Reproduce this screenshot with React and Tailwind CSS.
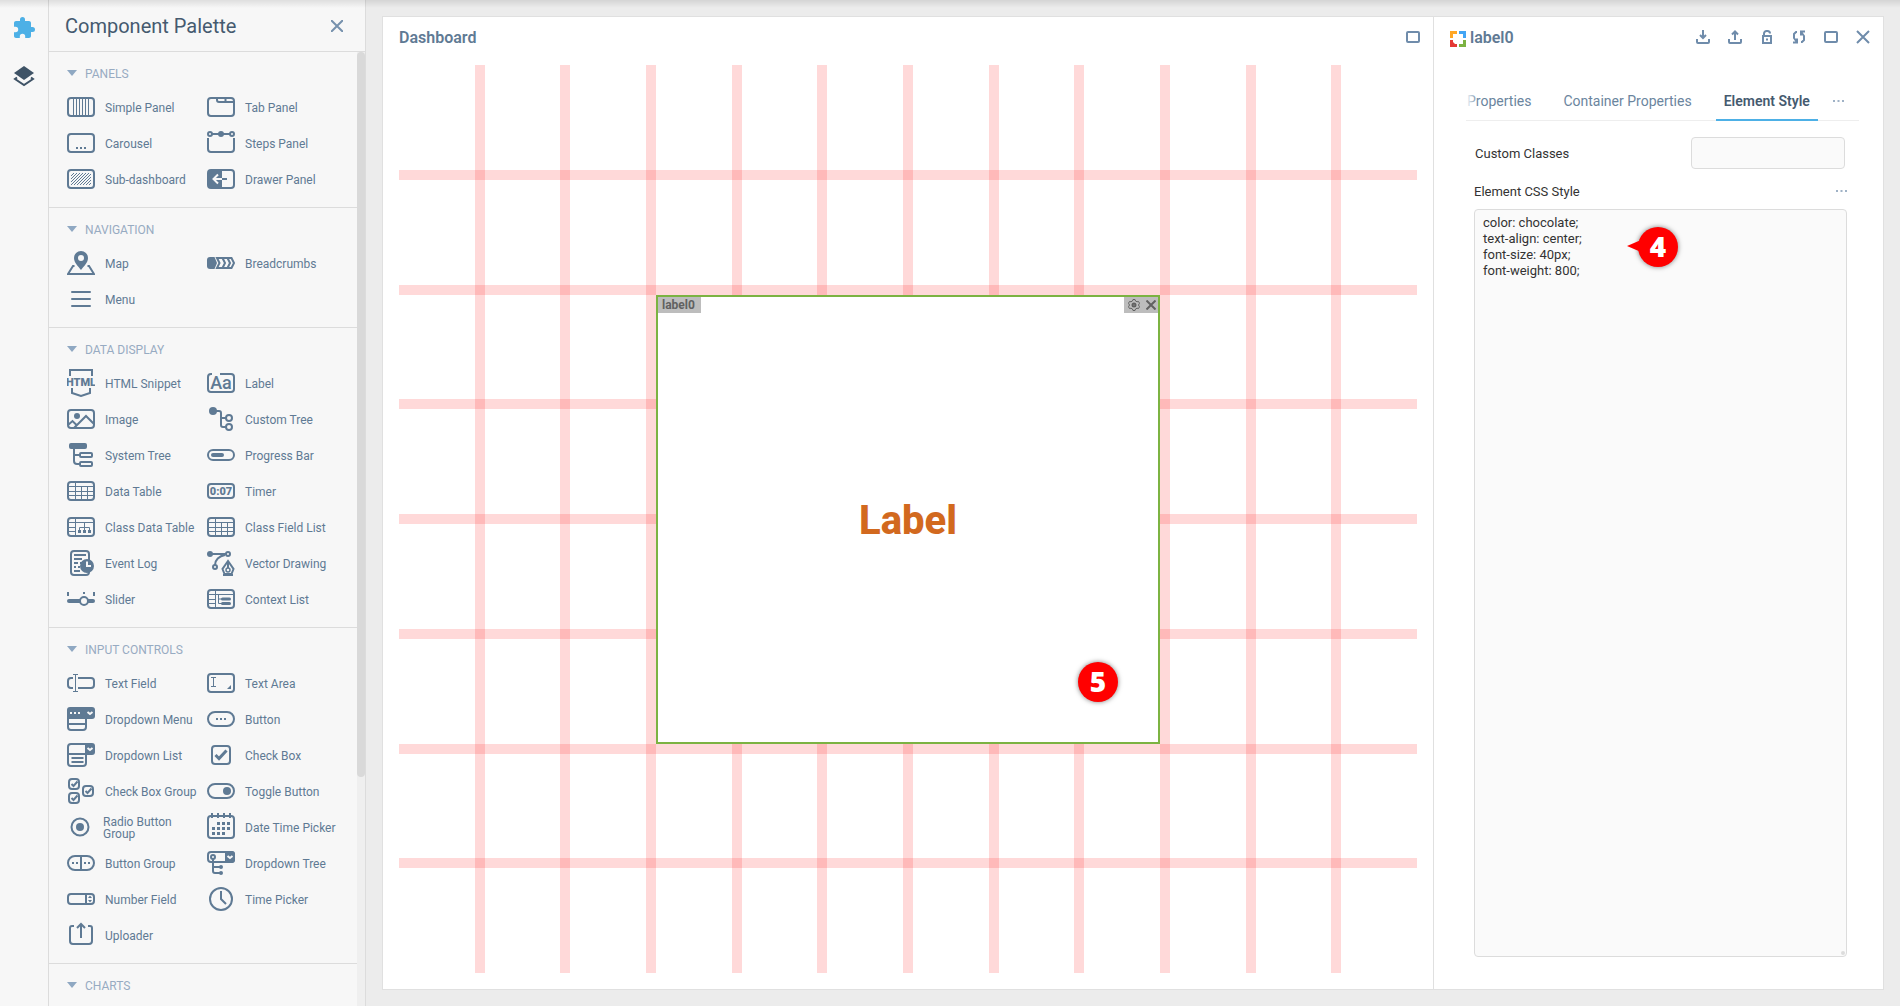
import React, { useState } from 'react';
import clsx from 'clsx';

const BG = '#f7f7f7';

const Frame = () => <rect x="1" y="5" width="26" height="18" rx="3" />;

const TableGrid = () => (
  <>
    <Frame />
    <path strokeWidth="1" d="M8.5 5v18M2 9.5h24M2 14.5h24M2 18.5h24M14.5 9.5V23M20.5 9.5V23" />
  </>
);

const TableSide = () => (
  <>
    <Frame />
    <path strokeWidth="1" d="M8.5 5v18M2 9.5h24M2 14.5h6M2 18.5h6" />
  </>
);

const Dots = ({ points, size = 2, fill = 'currentColor' }) =>
  points.map(([x, y]) => (
    <rect key={`${x}-${y}`} x={x - size / 2} y={y - size / 2} width={size} height={size} fill={fill} stroke="none" />
  ));

const SmallCheck = ({ x, y }) => (
  <g transform={`translate(${x} ${y})`}>
    <rect x="1" y="1" width="10" height="10" rx="3" />
    <path d="M3.5 6l2 2 4-4.5" />
  </g>
);

// Palette glyphs, all on a 28x28 canvas
const glyphs = {
  simplePanel: (
    <>
      <Frame />
      <path strokeWidth="1" d="M6.5 6v16M9.5 6v16M12.5 6v16M15.5 6v16M18.5 6v16M21.5 6v16" />
    </>
  ),
  tabPanel: (
    <>
      <Frame />
      <path d="M10 5v2a2 2 0 0 0 2 2h15M18.5 5v4" />
    </>
  ),
  carousel: (
    <>
      <Frame />
      <Dots points={[[10, 19], [14, 19], [18, 19]]} />
    </>
  ),
  stepsPanel: (
    <>
      <path d="M1 9v11a3 3 0 0 0 3 3h20a3 3 0 0 0 3-3V9M5 5h18" />
      <circle cx="3" cy="5" r="2" />
      <circle cx="25" cy="5" r="2" />
      <circle cx="14" cy="5" r="3" fill="currentColor" stroke="none" />
    </>
  ),
  subDashboard: (
    <>
      <defs>
        <pattern id="hatch" width="3" height="3" patternUnits="userSpaceOnUse">
          <path d="M-1 1l2-2M0 3l3-3M2 4l2-2" stroke="currentColor" strokeWidth="1" />
        </pattern>
      </defs>
      <Frame />
      <rect x="4" y="8" width="20" height="12" fill="url(#hatch)" stroke="none" />
    </>
  ),
  drawerPanel: (
    <>
      <Frame />
      <path d="M3 5h12v18H3a2 2 0 0 1-2-2V7z" fill="currentColor" stroke="none" />
      <path d="M15 14h5" />
      <path stroke={BG} d="M6 14h9M11 9.5L6.5 14l4.5 4.5" />
    </>
  ),
  map: (
    <>
      <path
        fill="currentColor"
        stroke="none"
        fillRule="evenodd"
        d="M14 2a7 7 0 0 1 7 7c0 5-4.500 8.500-7 12-2.500-3.500-7-7-7-12a7 7 0 0 1 7-7zm0 4a3 3 0 1 0 0 6 3 3 0 0 0 0-6z"
      />
      <path d="M7.500 17H6L1 25h26l-5-8h-1.500" />
    </>
  ),
  breadcrumbs: (
    <>
      <path fill="currentColor" stroke="none" d="M3 8h4.500l2.500 6-2.500 6H3a3 3 0 0 1-3-3v-6a3 3 0 0 1 3-3z" />
      <path d="M10 9h14.500l2.500 5-2.500 5H10l2.500-5zM15.500 9l2.500 5-2.500 5M20.500 9l2.500 5-2.500 5" />
    </>
  ),
  menu: <path strokeLinecap="round" d="M5 7h18M5 14h18M5 21h18" />,
  html: (
    <>
      <path d="M3 7V1h22v6M5 19v5l9 3 9-3v-5" />
      <text x="14" y="17" textAnchor="middle" fontSize="11" fontWeight="900" fill="currentColor" stroke="none">HTML</text>
    </>
  ),
  label: (
    <>
      <path d="M5 5H4a3 3 0 0 0-3 3v12a3 3 0 0 0 3 3h20a3 3 0 0 0 3-3V8a3 3 0 0 0-3-3H13" />
      <text x="14" y="20" textAnchor="middle" fontSize="18" fontWeight="500" fill="currentColor" stroke="none">Aa</text>
    </>
  ),
  image: (
    <>
      <Frame />
      <circle cx="10" cy="11" r="3" fill="currentColor" stroke="none" />
      <path d="M7 23L19 11l8 8M1 20l4.500-4 4 4" />
    </>
  ),
  customTree: (
    <>
      <circle cx="6" cy="6" r="4" fill="currentColor" stroke="none" />
      <path d="M9 6h3a2 2 0 0 1 2 2v12a2 2 0 0 0 2 2h3M14 13h5" />
      <circle cx="22" cy="13" r="3" />
      <circle cx="22" cy="22" r="3" />
    </>
  ),
  systemTree: (
    <>
      <rect x="2" y="2" width="18" height="6" rx="2" fill="currentColor" stroke="none" />
      <path d="M7 8v12a3 3 0 0 0 3 3h3M7 14h6" />
      <rect x="13" y="12" width="12" height="4" rx="1" />
      <rect x="13" y="21" width="12" height="4" rx="1" />
    </>
  ),
  progressBar: (
    <>
      <rect x="1" y="9" width="26" height="10" rx="5" />
      <rect x="4" y="12" width="13" height="4" rx="2" fill="currentColor" stroke="none" />
    </>
  ),
  dataTable: <TableGrid />,
  timer: (
    <>
      <rect x="1" y="7" width="26" height="14" rx="3" />
      <text x="14" y="18" textAnchor="middle" fontSize="11" fontWeight="900" fill="currentColor" stroke="none">0:07</text>
    </>
  ),
  classDataTable: (
    <>
      <TableSide />
      <path strokeWidth="1" d="M17.500 10v9M12.500 19v-4.500h10V19" />
      <Dots size={3} points={[[12.5, 18.5], [17.5, 18.5], [22.5, 18.5]]} />
    </>
  ),
  eventLog: (
    <>
      <rect x="4" y="2" width="18" height="24" rx="3" />
      <path d="M7 6h12M7 10h8M7 14h4M13 14h2M7 18h2M11 18h2M7 22h6" />
      <circle cx="20" cy="17" r="7" fill="currentColor" stroke="none" />
      <path stroke={BG} d="M20 12.500V17h4" />
    </>
  ),
  vectorDrawing: (
    <>
      <circle cx="3" cy="5" r="3" fill="currentColor" stroke="none" />
      <path d="M5 5h14M18 6c-6 1-10 5-10 10" />
      <circle cx="21" cy="5" r="2" />
      <circle cx="8" cy="18" r="2" />
      <path d="M21 12l-5.500 8 2 5h7l2-5zM16 26h10M21 13v6" />
      <circle cx="21" cy="21" r="2" strokeWidth="1.500" />
    </>
  ),
  slider: (
    <>
      <path strokeWidth="4" strokeLinecap="round" d="M2 16h24" />
      <circle cx="17" cy="16" r="4" fill={BG} />
      <path d="M1 7v4M17 7v2M27 7v4" />
    </>
  ),
  contextList: (
    <>
      <TableSide />
      <path strokeWidth="1" d="M11.500 10v8.500H15M11.500 14H15" />
      <path strokeWidth="3" strokeLinecap="round" d="M15.500 14h7M15.500 18.500h7" />
    </>
  ),
  textField: (
    <>
      <path d="M6 9H4a3 3 0 0 0-3 3v4a3 3 0 0 0 3 3h2M11 9h13a3 3 0 0 1 3 3v4a3 3 0 0 1-3 3H11" />
      <path strokeWidth="1" d="M6 5.500h5M6 22.500h5M8.500 5.500v17" />
    </>
  ),
  textArea: (
    <>
      <Frame />
      <path strokeWidth="1" d="M4 8.500h5M4 17.500h5M6.500 8.500v9" />
      <path fill="currentColor" stroke="none" d="M20 20h4v-4z" />
    </>
  ),
  dropdownMenu: (
    <>
      <path fill="currentColor" stroke="none" d="M3 2h22a3 3 0 0 1 3 3v6a3 3 0 0 1-3 3H0V5a3 3 0 0 1 3-3z" />
      <path d="M1 13v9a3 3 0 0 0 3 3h12a3 3 0 0 0 3-3v-9M1 19h18" />
      <Dots fill={BG} points={[[4, 8], [8, 8], [12, 8]]} />
      <path stroke={BG} d="M20.500 7l2.500 2 2.500-2" />
    </>
  ),
  button: (
    <>
      <rect x="1" y="7" width="26" height="14" rx="7" />
      <Dots points={[[10, 14], [14, 14], [18, 14]]} />
    </>
  ),
  dropdownList: (
    <>
      <path d="M19 13v9a3 3 0 0 1-3 3H4a3 3 0 0 1-3-3V6a3 3 0 0 1 3-3h20M1 13h20M4.500 17h12M4.500 21h12" />
      <path fill="currentColor" stroke="none" d="M18 2h7a3 3 0 0 1 3 3v6a3 3 0 0 1-3 3h-7z" />
      <path stroke={BG} d="M20.500 7l2.500 2 2.500-2" />
    </>
  ),
  checkBox: (
    <>
      <rect x="5" y="5" width="18" height="18" rx="3" />
      <path strokeWidth="3" d="M8.500 14l3.500 3.500 7.500-8" />
    </>
  ),
  checkBoxGroup: (
    <>
      <SmallCheck x={1} y={1} />
      <SmallCheck x={1} y={15} />
      <SmallCheck x={15} y={8} />
    </>
  ),
  toggleButton: (
    <>
      <rect x="1" y="7" width="26" height="14" rx="7" />
      <circle cx="20" cy="14" r="4" fill="currentColor" stroke="none" />
    </>
  ),
  radioGroup: (
    <>
      <circle cx="13" cy="14" r="8.500" />
      <circle cx="13" cy="14" r="4" fill="currentColor" stroke="none" />
    </>
  ),
  dateTime: (
    <>
      <rect x="1" y="3" width="26" height="22" rx="3" />
      <path d="M5 0v5M11 0v5M17 0v5M23 0v5" />
      <Dots
        size={3}
        points={[[11.5, 10.5], [16.5, 10.5], [21.5, 10.5], [6.5, 15.5], [11.5, 15.5], [16.5, 15.5], [21.5, 15.5], [6.5, 20.5], [11.5, 20.5], [16.5, 20.5]]}
      />
    </>
  ),
  buttonGroup: (
    <>
      <rect x="1" y="7" width="26" height="14" rx="7" />
      <path d="M14 7v14" />
      <Dots points={[[6, 14], [10, 14], [18, 14], [22, 14]]} />
    </>
  ),
  dropdownTree: (
    <>
      <rect x="1" y="3" width="26" height="10" rx="3" />
      <path fill="currentColor" stroke="none" d="M18 2h7a3 3 0 0 1 3 3v6a3 3 0 0 1-3 3h-7z" />
      <path stroke={BG} d="M20.500 7l2.500 2 2.500-2" />
      <circle cx="6" cy="8" r="2" />
      <path d="M6 10v12a2 2 0 0 0 2 2h6M6 18h8" />
      <circle cx="14" cy="18" r="2" fill="currentColor" stroke="none" />
      <circle cx="14" cy="24" r="2" fill="currentColor" stroke="none" />
    </>
  ),
  numberField: (
    <>
      <rect x="1" y="9" width="26" height="10" rx="3" />
      <path d="M19 9v10" />
      <path fill="currentColor" stroke="none" d="M21 13l2-2.500 2 2.500zM21 15l2 2.500 2-2.500z" />
    </>
  ),
  timePicker: (
    <>
      <circle cx="14" cy="14" r="11" />
      <path d="M14 6v8l5 5" />
    </>
  ),
  uploader: (
    <>
      <path d="M7 5H5a2 2 0 0 0-2 2v13a3 3 0 0 0 3 3h16a3 3 0 0 0 3-3V7a2 2 0 0 0-2-2h-2M14 17V3M10 7l4-4 4 4" />
    </>
  ),
};

const sections = [
  {
    title: 'PANELS',
    items: [
      ['simplePanel', 'Simple Panel'],
      ['tabPanel', 'Tab Panel'],
      ['carousel', 'Carousel'],
      ['stepsPanel', 'Steps Panel'],
      ['subDashboard', 'Sub-dashboard'],
      ['drawerPanel', 'Drawer Panel'],
    ],
  },
  {
    title: 'NAVIGATION',
    items: [
      ['map', 'Map'],
      ['breadcrumbs', 'Breadcrumbs'],
      ['menu', 'Menu'],
    ],
  },
  {
    title: 'DATA DISPLAY',
    items: [
      ['html', 'HTML Snippet'],
      ['label', 'Label'],
      ['image', 'Image'],
      ['customTree', 'Custom Tree'],
      ['systemTree', 'System Tree'],
      ['progressBar', 'Progress Bar'],
      ['dataTable', 'Data Table'],
      ['timer', 'Timer'],
      ['classDataTable', 'Class Data Table'],
      ['dataTable', 'Class Field List'],
      ['eventLog', 'Event Log'],
      ['vectorDrawing', 'Vector Drawing'],
      ['slider', 'Slider'],
      ['contextList', 'Context List'],
    ],
  },
  {
    title: 'INPUT CONTROLS',
    items: [
      ['textField', 'Text Field'],
      ['textArea', 'Text Area'],
      ['dropdownMenu', 'Dropdown Menu'],
      ['button', 'Button'],
      ['dropdownList', 'Dropdown List'],
      ['checkBox', 'Check Box'],
      ['checkBoxGroup', 'Check Box Group'],
      ['toggleButton', 'Toggle Button'],
      ['radioGroup', 'Radio Button Group'],
      ['dateTime', 'Date Time Picker'],
      ['buttonGroup', 'Button Group'],
      ['dropdownTree', 'Dropdown Tree'],
      ['numberField', 'Number Field'],
      ['timePicker', 'Time Picker'],
      ['uploader', 'Uploader'],
    ],
  },
  { title: 'CHARTS', items: [] },
];

const PaletteItem = ({ glyph, name }) => {
  const wraps = name.length > 17;
  return (
    <button type="button" className="flex h-9 items-center text-left">
      <svg width="28" height="28" viewBox="0 0 28 28" fill="none" stroke="currentColor" strokeWidth="2" className="shrink-0">
        {glyphs[glyph]}
      </svg>
      <span className={wraps ? 'ml-2 w-20 pt-0.5 text-xs leading-3' : 'ml-2.5 whitespace-nowrap pt-0.5 text-xs'}>{name}</span>
    </button>
  );
};

const PaletteSection = ({ title, items }) => (
  <section className="border-b border-[#dcdcdc] pb-2.5 pl-[18px]">
    <h3 className="h-[37px] pt-3">
      <button type="button" className="flex items-center gap-2 text-xs text-[#97abc2]">
        <svg width="10" height="6" viewBox="0 0 10 6" fill="#8fa8c2">
          <path d="M0 0h10L5 6z" />
        </svg>
        <span className="pt-0.5">{title}</span>
      </button>
    </h3>
    <div className="grid grid-cols-[140px_140px] text-[#5f7a94]">
      {items.map(([glyph, name]) => (
        <PaletteItem key={name} glyph={glyph} name={name} />
      ))}
    </div>
  </section>
);

const Palette = () => (
  <aside className="flex w-[317px] shrink-0 flex-col border-r border-[#dcdcdc] bg-[#f7f7f7]">
    <div className="flex h-[52px] shrink-0 items-center justify-between border-b border-[#dcdcdc] pl-4 pr-[22px]">
      <h2 className="text-xl text-[#455a6f]">Component Palette</h2>
      <button type="button" aria-label="Close palette" className="text-[#7691ad]">
        <svg width="12" height="12" viewBox="0 0 12 12" stroke="currentColor" strokeWidth="2">
          <path d="M0 0l12 12M12 0L0 12" />
        </svg>
      </button>
    </div>
    <div className="flex min-h-0 grow">
      <div className="grow overflow-hidden">
        {sections.map((section) => (
          <PaletteSection key={section.title} {...section} />
        ))}
      </div>
      <div className="w-2 shrink-0 bg-[#efefef]">
        <div className="h-[76%] rounded bg-[#d9d9d9]" />
      </div>
    </div>
  </aside>
);

const IconButton = ({ label, children }) => (
  <button type="button" aria-label={label} className="flex size-8 items-center justify-center text-[#6f8cab]">
    <svg width="16" height="16" viewBox="0 0 16 16" fill="none" stroke="currentColor" strokeWidth="2">
      {children}
    </svg>
  </button>
);

const MaximizeButton = () => (
  <IconButton label="Maximize">
    <rect x="2" y="3" width="12" height="10" rx="1" />
  </IconButton>
);

const Marker = ({ number, pointer, className }) => (
  <div
    className={clsx(
      'absolute flex size-10 items-center justify-center rounded-full bg-[#ff0000] pb-0.5 shadow-[0_0_5px_rgba(0,0,0,0.5)]',
      className
    )}
  >
    {pointer && (
      <svg width="14" height="12" viewBox="0 0 14 12" fill="#ff0000" className="absolute right-[37px]">
        <path d="M0 6L14 0v12z" />
      </svg>
    )}
    <span className="font-['Open_Sans','Noto_Sans',sans-serif] text-[28px] font-extrabold leading-10 text-white">{number}</span>
  </div>
);

// Pink gutters between the tracks of the layout grid
const Gutters = ({ tracks, vertical }) => (
  <div className={clsx('flex [grid-area:1/1]', vertical ? 'flex-row' : 'flex-col')}>
    {Array.from({ length: tracks }, (_, i) => (
      <React.Fragment key={i}>
        {i > 0 && <div className="shrink-0 basis-2.5 bg-[#ff0000]/15" />}
        <div className="flex-1" />
      </React.Fragment>
    ))}
  </div>
);

const Dashboard = () => (
  <section className="flex min-w-0 grow flex-col">
    <div className="flex h-12 shrink-0 items-start justify-between pl-4 pr-1">
      <h2 className="pt-[9px] text-base font-semibold text-[#5f7a94]">Dashboard</h2>
      <div className="pt-1">
        <MaximizeButton />
      </div>
    </div>
    <div className="mx-4 mb-4 grid min-h-0 grow grid-cols-1 grid-rows-1">
      <Gutters tracks={12} vertical />
      <Gutters tracks={8} />
      <div className="grid min-h-0 grid-cols-12 grid-rows-8 gap-2.5 [grid-area:1/1]">
        <div className="relative col-span-6 col-start-4 row-span-4 row-start-3 flex items-center justify-center border-2 border-[#7cb342] bg-white">
          <span className="absolute left-0 top-0 bg-[#bdbdbd] pl-1 pr-1.5 text-xs font-bold leading-4 text-[#616161]">label0</span>
          <div className="absolute right-0 top-0 flex h-4 items-center gap-1.5 bg-[#bdbdbd] pl-1 pr-0.5 text-[#616161]">
            <button type="button" aria-label="Settings">
              <svg width="12" height="12" viewBox="0 0 12 12" fill="none" stroke="currentColor">
                <path d="M5 .5h2l.5 1.500 1.500.8 1.500-.3 1 1.700L10.500 6l1 1.800-1 1.700L9 9.200l-1.500.8-.5 1.500H5L4.500 10 3 9.200l-1.500.3-1-1.700L1.500 6l-1-1.800 1-1.700L3 2.800 4.500 2z" />
                <circle cx="6" cy="6" r="1.500" strokeWidth="2" />
              </svg>
            </button>
            <button type="button" aria-label="Remove">
              <svg width="10" height="10" viewBox="0 0 10 10" stroke="currentColor" strokeWidth="2">
                <path d="M.5.5l9 9M9.500.5l-9 9" />
              </svg>
            </button>
          </div>
          <span className="pt-1 text-[40px] font-extrabold text-[#d2691e]">Label</span>
          <Marker number="5" className="bottom-10 right-10" />
        </div>
      </div>
    </div>
  </section>
);

const MoreIcon = () => (
  <svg width="11" height="2" viewBox="0 0 11 2" fill="currentColor">
    <path d="M0 0h2v2H0zM4.500 0h2v2h-2zM9 0h2v2H9z" />
  </svg>
);

const tabs = ['Properties', 'Container Properties', 'Element Style'];

const Inspector = () => {
  const [active, setActive] = useState('Element Style');
  const [css, setCss] = useState('color: chocolate;\ntext-align: center;\nfont-size: 40px;\nfont-weight: 800;');

  return (
    <section className="flex w-[450px] shrink-0 flex-col border-l border-[#e0e0e0]">
      <div className="flex h-10 items-start justify-between pl-4 pr-1">
        <div className="flex items-center gap-1 pt-[9px]">
          <svg width="16" height="16" viewBox="0 0 16 16" className="mt-0.5">
            <path fill="#ffa726" d="M0 0h7v3H3v4H0z" />
            <path fill="#42a5f5" d="M9 0h7v7h-3V3H9z" />
            <path fill="#e53935" d="M0 9h3v2l2 2h2v3H0z" />
            <path fill="#7cb342" d="M13 9h3v7H9v-3h4z" />
          </svg>
          <h2 className="text-base font-semibold text-[#5f7a94]">label0</h2>
        </div>
        <div className="flex pt-1">
          <IconButton label="Download">
            <path d="M2 10v3a1 1 0 0 0 1 1h10a1 1 0 0 0 1-1v-3M8 1v8M5 6l3 3 3-3" />
          </IconButton>
          <IconButton label="Upload">
            <path d="M2 10v3a1 1 0 0 0 1 1h10a1 1 0 0 0 1-1v-3M8 11V3M5 5.500l3-3 3 3" />
          </IconButton>
          <IconButton label="Unlock">
            <rect x="4" y="7" width="8" height="7" />
            <path d="M5 7V4.500A2.500 2.500 0 0 1 7.500 2h1A2.500 2.500 0 0 1 11 4.500" />
            <path d="M7 10.500h2" />
          </IconButton>
          <IconButton label="Refresh">
            <path d="M6 3H5L3 5v4l2.500 3.500M2 13.500h4v-4M10 13h1l2-2V7l-2.500-3.500M14 2.500h-4v4" />
          </IconButton>
          <MaximizeButton />
          <IconButton label="Close">
            <path d="M2 2l12 12M14 2L2 14" />
          </IconButton>
        </div>
      </div>

      <div className="ml-8 mr-6 mt-8 flex h-8 items-start justify-between border-b border-[#eeeeee]">
        <div role="tablist" className="relative flex h-8 gap-4 text-sm">
          {tabs.map((tab, i) => (
            <button
              key={tab}
              type="button"
              role="tab"
              aria-selected={active === tab}
              onClick={() => setActive(tab)}
              className={clsx(
                'flex h-8 items-start border-b-2 pr-2 pt-0.5',
                i === 0 ? 'pl-px' : 'pl-2',
                active === tab ? 'border-[#4db0e6] font-semibold text-[#455a6f]' : 'border-transparent text-[#6b859e]'
              )}
            >
              {tab}
            </button>
          ))}
          <div className="absolute left-0 top-0 h-6 w-3 bg-linear-to-r from-white to-transparent" />
        </div>
        <button type="button" aria-label="More tabs" className="mr-[15px] flex h-6 items-center text-[#9fb2c6]">
          <MoreIcon />
        </button>
      </div>

      <div className="mb-8 ml-10 mr-9 mt-4 flex grow flex-col">
        <div className="flex items-center justify-between pl-px pr-0.5">
          <label htmlFor="custom-classes" className="pt-0.5 text-[13px] text-[#333333]">Custom Classes</label>
          <input
            id="custom-classes"
            type="text"
            className="h-8 w-[154px] rounded border border-[#dcdcdc] bg-[#fafafa] px-2 text-[13px] outline-none"
          />
        </div>
        <div className="mt-3 flex h-5 items-center justify-between">
          <label htmlFor="css-style" className="pt-0.5 text-[13px] text-[#333333]">Element CSS Style</label>
          <button type="button" aria-label="More options" className="text-[#9fb2c6]">
            <MoreIcon />
          </button>
        </div>
        <div className="relative mt-2 flex grow">
          <textarea
            id="css-style"
            value={css}
            spellCheck={false}
            onChange={(e) => setCss(e.target.value)}
            className="w-full resize-none rounded border border-[#dcdcdc] bg-[#fafafa] px-2 py-[5px] text-[13px] leading-4 text-[#333333] outline-none"
          />
          <span className="absolute bottom-0.5 right-0.5 size-1 rounded-full bg-[#dcdcdc]" />
          <Marker number="4" pointer className="left-[164px] top-[18px]" />
        </div>
      </div>
    </section>
  );
};

const Rail = () => (
  <nav className="flex w-[49px] shrink-0 flex-col items-center gap-6 border-r border-[#dcdcdc] bg-[#f7f7f7] pt-4">
    <button type="button" aria-label="Components">
      <svg width="24" height="24" viewBox="0 0 24 24" fill="#4db0e6">
        <path d="M20.500 11H19V7c0-1.100-.9-2-2-2h-4V3.500a2.500 2.500 0 0 0-5 0V5H4c-1.100 0-2 .9-2 2v3.800h1.500a2.700 2.700 0 0 1 0 5.400H2V20c0 1.100.9 2 2 2h3.800v-1.500a2.700 2.700 0 0 1 5.400 0V22H17c1.100 0 2-.9 2-2v-4h1.500a2.500 2.500 0 0 0 0-5z" />
      </svg>
    </button>
    <button type="button" aria-label="Layers">
      <svg width="24" height="24" viewBox="0 0 24 24">
        <path fill="#3f5366" d="M12 2l10 7-10 7L2 9z" />
        <path fill="none" stroke="#3f5366" strokeWidth="2" d="M5 13.500l-2 1.500 9 6 9-6-2-1.500" />
      </svg>
    </button>
  </nav>
);

const App = () => (
  <div className="relative flex h-screen overflow-hidden bg-[#ececec] font-[Roboto,sans-serif]">
    <Rail />
    <Palette />
    <main className="flex min-w-0 grow p-4">
      <div className="flex min-w-0 grow border border-[#e0e0e0] bg-white">
        <Dashboard />
        <Inspector />
      </div>
    </main>
    <div className="pointer-events-none absolute inset-x-0 top-0 h-2 bg-linear-to-b from-black/10 to-transparent" />
  </div>
);

export default App;
